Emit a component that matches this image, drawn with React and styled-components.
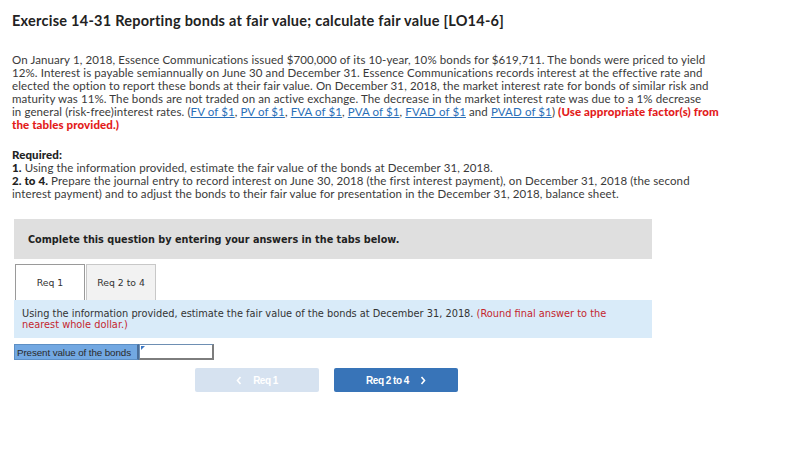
import React from "react";
import styled, { createGlobalStyle } from "styled-components";

const Global = createGlobalStyle`
  html, body { margin: 0; padding: 0; background: #fff; }
  body { font-family: Lato, "Open Sans", sans-serif; color: #333; }
`;

const Page = styled.div`
  width: 810px;
  height: 465px;
  box-sizing: border-box;
  padding: 12px 0 0 12px;
  overflow: hidden;
`;

const Title = styled.h1`
  margin: 0;
  font-family: Lato, sans-serif;
  font-size: 14.5px;
  font-weight: 700;
  color: #222;
  line-height: 17px;
  letter-spacing: 0.25px;
`;

const Para = styled.p`
  margin: ${(p) => p.$top || 0}px 0 0 0;
  font-size: 11.5px;
  line-height: 13px;
  letter-spacing: 0.1px;
  color: #3a3a3a;
  white-space: nowrap;
`;

const Link = styled.a`
  color: #2a6fb8;
  text-decoration: underline;
`;

const RedBold = styled.span`
  color: #e31b1b;
  font-weight: 900;
`;

const Strong = styled.strong`
  font-weight: 900;
  color: #222;
`;

const Banner = styled.div`
  margin: 19px 0 0 2px;
  width: 638px;
  height: 40px;
  background: #dfdfdf;
  display: flex;
  align-items: center;
  padding-left: 14px;
  box-sizing: border-box;
  font-family: "DejaVu Sans", Verdana, sans-serif;
  font-size: 9.7px;
  font-weight: 700;
  color: #222;
`;

const Tabs = styled.div`
  display: flex;
  margin: 5px 0 0 3px;
  gap: 1px;
`;

const Tab = styled.div`
  width: 70px;
  height: 36px;
  box-sizing: border-box;
  display: flex;
  align-items: center;
  justify-content: center;
  font-family: "DejaVu Sans", Verdana, sans-serif;
  font-size: 9.3px;
  color: #333;
  background: ${(p) => (p.$active ? "#fff" : "#f2f2f2")};
  border: 1px solid ${(p) => (p.$active ? "#9a9a9a" : "#c8c8c8")};
  border-bottom: none;
`;

const Info = styled.div`
  margin-left: 2px;
  width: 638px;
  height: 38px;
  box-sizing: border-box;
  background: #d9ebf9;
  padding: 8px 0 0 8px;
  font-family: "DejaVu Sans", Verdana, sans-serif;
  font-size: 9.8px;
  line-height: 11px;
  color: #333;
`;

const Red = styled.span`
  color: #c4262e;
`;

const InputRow = styled.div`
  display: flex;
  margin: 6px 0 0 2px;
  height: 16px;
`;

const Label = styled.div`
  width: 125px;
  box-sizing: border-box;
  background: #72a8e2;
  border: 1px solid #5d8fc4;
  border-right: 2px solid #4a6e9a;
  display: flex;
  align-items: center;
  padding-left: 2px;
  font-family: "Liberation Sans", Arial, sans-serif;
  font-size: 9.8px;
  letter-spacing: -0.1px;
  color: #2a2a2a;
  white-space: nowrap;
`;

const InputBox = styled.div`
  position: relative;
  width: 75px;
  box-sizing: border-box;
  border: 1px solid #6e8fb3;
  border-right: 2px solid #7d7d7d;
  border-bottom: 2px solid #7d7d7d;
  background: #fff;
`;

const Corner = styled.span`
  position: absolute;
  left: 1px;
  top: 1px;
  width: 0;
  height: 0;
  border-top: 4px solid #3a76c4;
  border-right: 4px solid transparent;
`;

const Nav = styled.div`
  display: flex;
  gap: 15px;
  margin: 8px 0 0 183px;
`;

const NavButton = styled.div`
  width: 124px;
  height: 24px;
  border-radius: 2px;
  background: ${(p) => (p.$disabled ? "#d6e2f0" : "#3874b8")};
  color: #fff;
  display: flex;
  align-items: center;
  justify-content: center;
  gap: 11px;
  font-family: "Liberation Sans", Arial, sans-serif;
  font-weight: 700;
  font-size: 10px;
  letter-spacing: -0.5px;
`;

const Chevron = ({ dir }) => (
  <svg width="6" height="9" viewBox="0 0 6 9">
    <path
      d={dir === "left" ? "M4.5 1 L1.5 4.5 L4.5 8" : "M1.5 1 L4.5 4.5 L1.5 8"}
      fill="none"
      stroke="#fff"
      strokeWidth="1.6"
    />
  </svg>
);

export default function App() {
  return (
    <Page>
      <Global />
      <Title>Exercise 14-31 Reporting bonds at fair value; calculate fair value [LO14-6]</Title>
      <Para $top={24}>
        On January 1, 2018, Essence Communications issued $700,000 of its 10-year, 10% bonds for $619,711. The bonds were priced to yield
        <br />
        12%. Interest is payable semiannually on June 30 and December 31. Essence Communications records interest at the effective rate and
        <br />
        elected the option to report these bonds at their fair value. On December 31, 2018, the market interest rate for bonds of similar risk and
        <br />
        maturity was 11%. The bonds are not traded on an active exchange. The decrease in the market interest rate was due to a 1% decrease
        <br />
        in general (risk-free)interest rates. (<Link>FV of $1</Link>, <Link>PV of $1</Link>, <Link>FVA of $1</Link>,{" "}
        <Link>PVA of $1</Link>, <Link>FVAD of $1</Link> and <Link>PVAD of $1</Link>){" "}
        <RedBold>(Use appropriate factor(s) from</RedBold>
        <br />
        <RedBold>the tables provided.)</RedBold>
      </Para>
      <Para $top={17}>
        <Strong>Required:</Strong>
        <br />
        <Strong>1.</Strong> Using the information provided, estimate the fair value of the bonds at December 31, 2018.
        <br />
        <Strong>2. to 4.</Strong> Prepare the journal entry to record interest on June 30, 2018 (the first interest payment), on December 31, 2018 (the second
        <br />
        interest payment) and to adjust the bonds to their fair value for presentation in the December 31, 2018, balance sheet.
      </Para>
      <Banner>Complete this question by entering your answers in the tabs below.</Banner>
      <Tabs>
        <Tab $active>Req 1</Tab>
        <Tab>Req 2 to 4</Tab>
      </Tabs>
      <Info>
        Using the information provided, estimate the fair value of the bonds at December 31, 2018. <Red>(Round final answer to the</Red>
        <br />
        <Red>nearest whole dollar.)</Red>
      </Info>
      <InputRow>
        <Label>Present value of the bonds</Label>
        <InputBox>
          <Corner />
        </InputBox>
      </InputRow>
      <Nav>
        <NavButton $disabled>
          <Chevron dir="left" />
          Req 1
        </NavButton>
        <NavButton>
          Req 2 to 4
          <Chevron dir="right" />
        </NavButton>
      </Nav>
    </Page>
  );
}
